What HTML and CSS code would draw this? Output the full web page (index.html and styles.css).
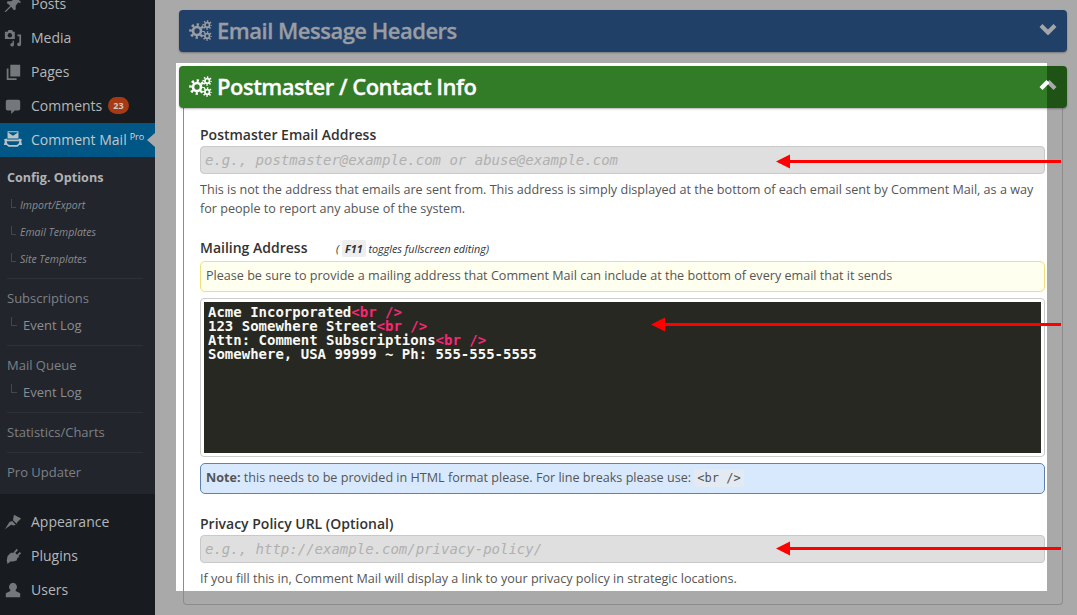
FILE: index.html

```html
<!DOCTYPE html>
<html lang="en">
<head>
  <meta charset="UTF-8" />
  <title>Comment Mail Config Options</title>
  <link rel="stylesheet" href="styles.css">
</head>
<body>
  <svg class="defs" width="0" height="0">
    <symbol id="gears" viewBox="0 0 23 21">
      <g fill="none" stroke="currentColor">
        <circle cx="8" cy="11" r="4" stroke-width="2.700"/>
        <circle cx="8" cy="11" r="6.400" stroke-width="2.800" stroke-dasharray="2.300 2.730" stroke-dashoffset="1.150"/>
        <circle cx="18.200" cy="5" r="2.300" stroke-width="1.700"/>
        <circle cx="18.200" cy="5" r="3.900" stroke-width="1.800" stroke-dasharray="1.400 1.660" stroke-dashoffset="0.700"/>
        <circle cx="18.200" cy="16" r="2.300" stroke-width="1.700"/>
        <circle cx="18.200" cy="16" r="3.900" stroke-width="1.800" stroke-dasharray="1.400 1.660" stroke-dashoffset="0.700"/>
      </g>
    </symbol>
  </svg>

  <!-- Sidebar -->
  <div class="sidebar">
    <div class="menu">
      <div class="item">
        <svg class="icon" viewBox="0 0 20 20"><path d="M12 1l7 7-2 1-1-1-3 4 0 4-2 1-3-4-6 6-1 0 0-1 6-6-4-3 1-2 4 0 4-3-1-1z"/></svg>
        <span>Posts</span>
      </div>
      <div class="item">
        <svg class="icon" viewBox="0 0 20 20"><path d="M1 3h3l1-2h4l1 2h2v8H1zM6.500 4.500a2.500 2.500 0 1 0 .01 0zM19 6v11a2.200 2.200 0 1 1-2-2.100V8h-2V6zM11 13v4.500a2 2 0 1 1-1.500-1.900V13z"/></svg>
        <span>Media</span>
      </div>
      <div class="item">
        <svg class="icon" viewBox="0 0 20 20"><path d="M7 2h11v13H7zM3 6h2v11h9v2H3z"/></svg>
        <span>Pages</span>
      </div>
      <div class="item">
        <svg class="icon" viewBox="0 0 20 20"><path d="M4 3h12a2 2 0 0 1 2 2v8a2 2 0 0 1-2 2h-4l-4 4v-4H4a2 2 0 0 1-2-2V5a2 2 0 0 1 2-2z"/></svg>
        <span>Comments</span>
        <span class="badge">23</span>
      </div>
      <div class="item current">
        <svg class="icon logo" viewBox="0 0 22 20"><path d="M5 1h12v8H5zM6 2.500l5 3.500 5-3.500v-.5H6z"/><path d="M1 10l3-1 1 1h12l1-1 3 1-1 2 1 4-3 0-2 2-1 0H7l-1 0-2-2-3 0 1-4zM4 12l1 3 2 1h8l2-1 1-3z"/></svg>
        <span>Comment Mail</span>
        <span class="pro">Pro</span>
      </div>
    </div>

    <div class="submenu">
      <div class="group">
        <div class="group-title active-title">Config. Options</div>
        <div class="sub-link small">Import/Export</div>
        <div class="sub-link small">Email Templates</div>
        <div class="sub-link small">Site Templates</div>
      </div>
      <div class="group">
        <div class="group-title">Subscriptions</div>
        <div class="sub-link">Event Log</div>
      </div>
      <div class="group">
        <div class="group-title">Mail Queue</div>
        <div class="sub-link">Event Log</div>
      </div>
      <div class="group solo">
        <div class="group-title">Statistics/Charts</div>
      </div>
      <div class="group solo last">
        <div class="group-title">Pro Updater</div>
      </div>
    </div>

    <div class="menu lower">
      <div class="item">
        <svg class="icon" viewBox="0 0 20 20"><path d="M11 2l8 4-4 4-1 2-4-4zM9 9l4 4-2 1-3-1-7 5 5-8z"/></svg>
        <span>Appearance</span>
      </div>
      <div class="item">
        <svg class="icon" viewBox="0 0 20 20"><path d="M14 2l1.500 1.500-3 3 2 2 3-3L19 7l-3 3 1 1-2 1-1 3-4 1-3 0-3 3-1-4 1-5 3-3 2-1 1 1z"/></svg>
        <span>Plugins</span>
      </div>
      <div class="item">
        <svg class="icon" viewBox="0 0 20 20"><path d="M10 2a4.500 4.500 0 0 1 3 7.800V11l5 2.500V18H2v-4.500L7 11V9.800A4.500 4.500 0 0 1 10 2z"/></svg>
        <span>Users</span>
      </div>
    </div>
  </div>

  <!-- Main -->
  <div class="main">
    <div class="spot"></div>

    <div class="panel-head blue">
      <svg class="gears"><use href="#gears"/></svg>
      <span class="panel-title">Email Message Headers</span>
      <svg class="chevron" viewBox="0 0 18 12"><path d="M2 2.500l7 7 7-7" fill="none" stroke="#a3a5a8" stroke-width="4.200"/></svg>
    </div>

    <div class="panel-head green">
      <svg class="gears"><use href="#gears"/></svg>
      <span class="panel-title">Postmaster / Contact Info</span>
      <svg class="chevron" viewBox="0 0 18 12"><path d="M9 2.500l7 7" fill="none" stroke="#a9aba8" stroke-width="4.200"/><path d="M2 9.500l7-7" fill="none" stroke="#fff" stroke-width="4.200"/></svg>
    </div>

    <div class="panel-body">
      <div class="label first">Postmaster Email Address</div>
      <div class="field">e.g., postmaster@example.com or abuse@example.com</div>
      <p class="desc">This is not the address that emails are sent from. This address is simply displayed at the bottom of each email sent by Comment Mail, as a way for people to report any abuse of the system.</p>

      <div class="label spaced">Mailing Address <span class="hint">( <b class="key">F11</b> toggles fullscreen editing)</span></div>
      <div class="alert yellow">Please be sure to provide a mailing address that Comment Mail can include at the bottom of every email that it sends</div>
      <div class="editor">
        <pre class="code">Acme Incorporated<span class="tag">&lt;br /&gt;</span>
123 Somewhere Street<span class="tag">&lt;br /&gt;</span>
Attn: Comment Subscriptions<span class="tag">&lt;br /&gt;</span>
Somewhere, USA 99999 ~ Ph: 555-555-5555</pre>
      </div>
      <div class="alert note"><b>Note:</b> this needs to be provided in HTML format please. For line breaks please use: <code>&lt;br /&gt;</code></div>

      <div class="label spaced">Privacy Policy URL (Optional)</div>
      <div class="field">e.g., http://example.com/privacy-policy/</div>
      <p class="desc">If you fill this in, Comment Mail will display a link to your privacy policy in strategic locations.</p>
    </div>
  </div>

  <!-- Red arrows drawn on top of the screenshot -->
  <svg class="arrows" width="1077" height="615">
    <g fill="#f00">
      <rect x="789" y="160" width="272" height="3"/>
      <path d="M776 161.500l14-7v14z"/>
      <rect x="664" y="323" width="397" height="3"/>
      <path d="M651 324.500l14-7v14z"/>
      <rect x="789" y="547" width="272" height="3"/>
      <path d="M776 548.500l14-7v14z"/>
    </g>
  </svg>
</body>
</html>
```

FILE: styles.css

```css
* { margin: 0; padding: 0; box-sizing: border-box; }
html, body { height: 615px; overflow: hidden; }
body { display: flex; background: #a9a9a9; font-family: "Open Sans", sans-serif; color: #444; position: relative; }
.defs { position: absolute; }

/* sidebar */
.sidebar { width: 155px; height: 615px; flex: none; background: #181b1f; overflow: hidden; color: #b4b7ba; }
.menu { margin-top: -13px; }
.menu.lower { margin-top: 11px; }
.item { position: relative; height: 34px; display: flex; align-items: center; font-size: 14px; padding-left: 31px; padding-bottom: 1px; white-space: nowrap; }
.icon { position: absolute; left: 4px; top: 8px; width: 18px; height: 18px; fill: #75787b; }
.item.current { background: #005684; color: #c3c8cc; }
.item.current::after { content: ""; position: absolute; right: 0; top: 10px; border: 7px solid transparent; border-left: 0; border-right: 8px solid #a9a9a9; }
.icon.logo { left: 3px; top: 7px; width: 20px; height: 19px; fill: #b9c3c9; }
.badge { background: #a53a14; color: #cfcac8; font-size: 9px; font-weight: 700; border-radius: 9px; padding: 0 5px; line-height: 17px; margin-left: 6px; }
.pro { font-size: 9px; margin-left: 3px; line-height: 1; margin-bottom: 7px; color: #d5dade; }

.submenu { background: #22252b; color: #7d8186; }
.group { padding: 9px 0 6px; border-bottom: 1px solid #2e3137; margin: 0 12px 0 7px; }
.group:first-child { padding-top: 11px; padding-bottom: 5px; }
.group.solo { padding-bottom: 10px; }
.group.last { border-bottom: 0; padding-bottom: 12px; }
.group-title { font-size: 13px; line-height: 20px; white-space: nowrap; }
.active-title { font-weight: 700; color: #b0b3b6; font-size: 12.600px; }
.sub-link { position: relative; font-size: 13px; line-height: 27px; margin-top: 4px; padding-left: 16px; white-space: nowrap; color: #8a8d91; }
.sub-link::before { content: ""; position: absolute; left: 4px; top: 5px; width: 5px; height: 8px; border-left: 1px solid #43464b; border-bottom: 1px solid #43464b; }
.sub-link.small { font-size: 10.500px; font-style: italic; margin-top: 0; padding-left: 13px; }
.sub-link.small:nth-child(2) { margin-top: 4px; }
.sub-link.small::before { top: 7px; width: 4px; }

/* main */
.main { position: relative; z-index: 0; flex: 1; padding: 10px 10px 0 24px; }
.spot { position: absolute; z-index: -1; left: 21px; top: 63px; width: 871px; height: 528px; background: #fff; }
.panel-head { position: relative; height: 42px; display: flex; align-items: center; border-radius: 4px; padding-left: 10px; box-shadow: 0 1px 2px rgba(0,0,0,.3); }
.blue { background: #204068; color: #999da3; margin-bottom: 14px; }
.green { background: linear-gradient(to right, #327c28 868px, #1f5316 868px); color: #fff; }
.gears { width: 23px; height: 21px; margin-top: -1px; }
.panel-title { font-size: 22px; font-weight: 600; margin: -2px 0 0 5px; letter-spacing: -0.500px; -webkit-text-stroke: 0.300px currentColor; }
.chevron { position: absolute; right: 10px; top: 13px; width: 18px; height: 12px; }

.panel-body { margin: 0 4px; height: 497px; border: 1px solid #8c8c8c; border-top: 0; border-radius: 0 0 4px 4px; padding: 17px 17px 0 16px; }
.label { font-size: 14px; font-weight: 600; line-height: 20px; color: #333; }
.label.spaced { margin-top: 20px; }
.hint { font-size: 10.800px; font-weight: 400; font-style: italic; margin-left: 25px; }
.key { font-weight: 700; background: #eee; border-radius: 2px; padding: 1px 3px; }
.field { margin-top: 1px; height: 28px; line-height: 26px; padding-left: 4px; background: #dfdfdf; border: 1px solid #c9c9c9; border-radius: 4px; font-family: "DejaVu Sans Mono", monospace; font-style: italic; font-size: 14px; color: #b0b0b0; }
.desc { margin-top: 6px; font-size: 12.600px; line-height: 19px; color: #555; }
.alert { font-size: 12.600px; border-radius: 5px; padding-left: 5px; }
.yellow { margin-top: 2px; height: 31px; line-height: 28px; background: #fffff0; border: 1px solid #eee07a; color: #555; }
.editor { margin-top: 6px; height: 159px; padding: 3px; background: #fff; border: 1px solid #ccc; border-radius: 4px; }
.code { height: 151px; background: #272822; color: #f8f8f2; padding: 3px 0 0 4px; font-family: "DejaVu Sans Mono", monospace; font-size: 14px; font-weight: 700; line-height: 14px; }
.tag { color: #f92672; }
.note { margin-top: 6px; height: 31px; line-height: 27px; background: #d9e9fd; border: 1px solid #6080b0; color: #555; }
.note b { font-weight: 700; }
.note code { font-family: "DejaVu Sans Mono", monospace; font-size: 12px; background: #e3eaf2; border-radius: 2px; padding: 2px 3px; margin-left: 0; }

/* arrows sit over everything */
.arrows { position: absolute; left: 0; top: 0; pointer-events: none; }
```
